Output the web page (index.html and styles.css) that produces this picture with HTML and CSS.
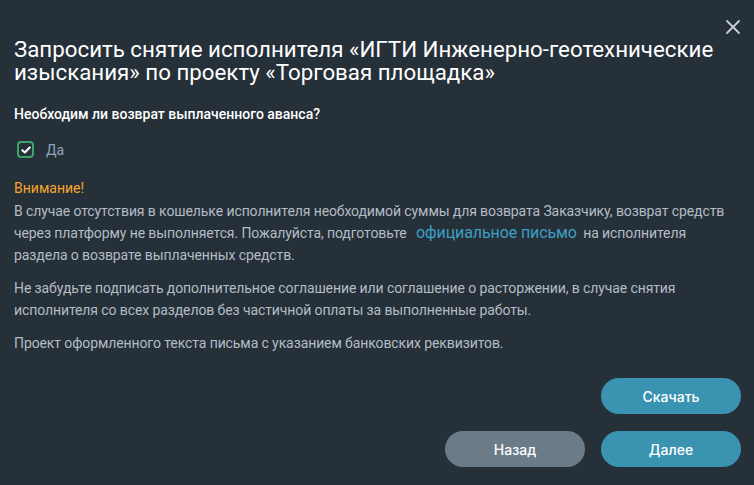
FILE: index.html
```html
<!DOCTYPE html>
<html lang="ru">
<head>
<meta charset="utf-8">
<link rel="stylesheet" href="styles.css">
</head>
<body>
<div class="modal">
  <button class="close" aria-label="Закрыть">
    <svg width="16" height="16" viewBox="0 0 16 16"><path d="M2 2L14 14M14 2L2 14" stroke="#c9d0d6" stroke-width="1.8" stroke-linecap="round"/></svg>
  </button>
  <h1 class="title">Запросить снятие исполнителя «ИГТИ Инженерно-геотехнические изыскания» по проекту «Торговая площадка»</h1>
  <p class="question">Необходим ли возврат выплаченного аванса?</p>
  <label class="check">
    <span class="box"><svg width="10" height="8" viewBox="0 0 10 8"><path d="M1.3 4.2L3.8 6.5L8.7 1.5" stroke="#fff" stroke-width="2" fill="none" stroke-linecap="round" stroke-linejoin="round"/></svg></span>
    <span class="check-label">Да</span>
  </label>
  <div class="notice">
    <div class="warn">Внимание!</div>
    <p class="text first">В случае отсутствия в кошельке исполнителя необходимой суммы для возврата Заказчику, возврат средств через платформу не выполняется. Пожалуйста, подготовьте <a class="link" href="#">официальное письмо</a> на исполнителя раздела о возврате выплаченных средств.</p>
    <p class="text">Не забудьте подписать дополнительное соглашение или соглашение о расторжении, в случае снятия исполнителя со всех разделов без частичной оплаты за выполненные работы.</p>
    <p class="text">Проект оформленного текста письма с указанием банковских реквизитов.</p>
  </div>
  <div class="actions">
    <div class="row"><button class="btn primary">Скачать</button></div>
    <div class="row"><button class="btn secondary">Назад</button><button class="btn primary">Далее</button></div>
  </div>
</div>
</body>
</html>
```
FILE: styles.css
```css
* { box-sizing: border-box; }
html, body { margin: 0; padding: 0; }
body {
  width: 754px;
  height: 485px;
  background: #263039;
  font-family: Roboto, "Liberation Sans", sans-serif;
  overflow: hidden;
}
.modal {
  position: relative;
  height: 485px;
  display: flex;
  flex-direction: column;
  padding: 38px 13px 18px 14px;
}
.close {
  position: absolute;
  top: 19px;
  right: 13px;
  background: none;
  border: 0;
  padding: 0;
  width: 16px;
  height: 16px;
}
.title {
  margin: 0;
  font-size: 22.3px;
  line-height: 23px;
  font-weight: 400;
  color: #ffffff;
  padding-right: 10px;
}
.question {
  margin: 21px 0 0;
  font-size: 14px;
  line-height: 18px;
  font-weight: 500;
  color: #ffffff;
}
.check {
  display: flex;
  align-items: center;
  gap: 12px;
  height: 17px;
  margin: 18px 0 0 3px;
}
.box {
  width: 17px;
  height: 17px;
  border: 2px solid #3aa66b;
  border-radius: 4px;
  display: flex;
  align-items: center;
  justify-content: center;
}
.check-label {
  font-size: 14px;
  color: #8ea3ba;
}
.notice {
  margin-top: 21px;
  max-width: 715px;
}
.warn {
  font-size: 14px;
  line-height: 18px;
  color: #f5a42c;
}
.text {
  margin: 11px 0 0;
  font-size: 14px;
  line-height: 22px;
  color: #b3bcc5;
  letter-spacing: -0.1px;
}
.text.first { margin-top: 3px; }
.link {
  display: inline-block;
  color: #3d9ec3;
  text-decoration: none;
  font-size: 16px;
  line-height: 18px;
  margin: 0 3px 0 6px;
}
.actions {
  display: flex;
  flex-direction: column;
  gap: 17px;
  margin-top: auto;
}
.row {
  display: flex;
  justify-content: flex-end;
  gap: 16px;
}
.btn {
  width: 140px;
  height: 36px;
  border: 0;
  border-radius: 18px;
  font-family: Inter, Roboto, sans-serif;
  font-size: 14px;
  font-weight: 500;
  color: #ffffff;
}
.primary { background: #3a93b0; }
.secondary { background: #6b7b87; }
```
